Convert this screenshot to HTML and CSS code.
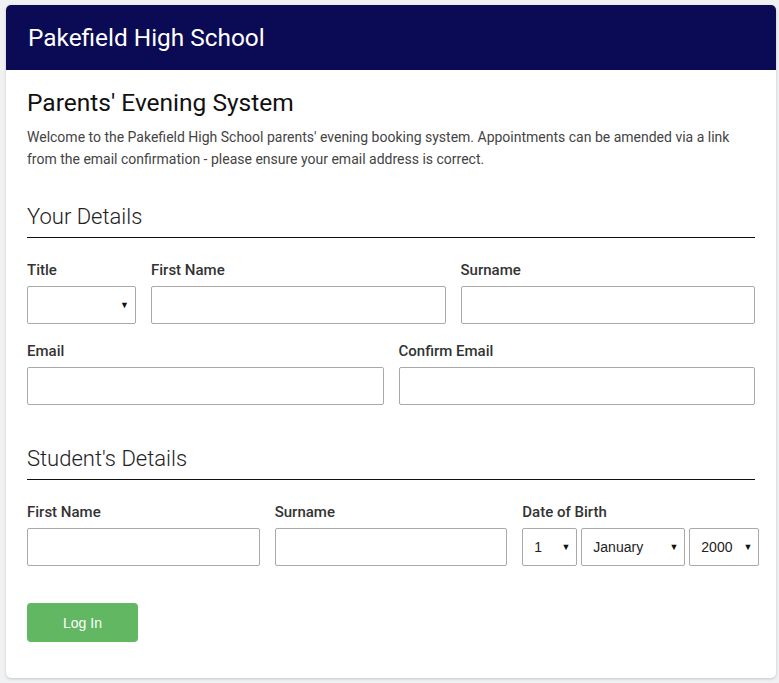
FILE: index.html
```html
<!DOCTYPE html>
<html>
<head>
<meta charset="utf-8">
<title>Pakefield High School</title>
<link rel="stylesheet" href="styles.css">
</head>
<body>
<div class="card">
  <div class="header">Pakefield High School</div>
  <div class="content">
    <h1 class="title">Parents' Evening System</h1>
    <p class="intro">Welcome to the Pakefield High School parents' evening booking system. Appointments can be amended via a link from the email confirmation - please ensure your email address is correct.</p>

    <h2 class="section first">Your Details</h2>
    <div class="row row-a">
      <div class="field">
        <label class="label">Title</label>
        <div class="select"><span class="val"></span><span class="arrow">&#9660;</span></div>
      </div>
      <div class="field">
        <label class="label">First Name</label>
        <div class="input"></div>
      </div>
      <div class="field">
        <label class="label">Surname</label>
        <div class="input"></div>
      </div>
    </div>
    <div class="row row-b">
      <div class="field">
        <label class="label">Email</label>
        <div class="input"></div>
      </div>
      <div class="field">
        <label class="label">Confirm Email</label>
        <div class="input"></div>
      </div>
    </div>

    <h2 class="section second">Student's Details</h2>
    <div class="row row-c">
      <div class="field">
        <label class="label">First Name</label>
        <div class="input"></div>
      </div>
      <div class="field">
        <label class="label">Surname</label>
        <div class="input"></div>
      </div>
      <div class="field">
        <label class="label">Date of Birth</label>
        <div class="dob">
          <div class="select s-day"><span class="val">1</span><span class="arrow">&#9660;</span></div>
          <div class="select s-month"><span class="val">January</span><span class="arrow">&#9660;</span></div>
          <div class="select s-year"><span class="val">2000</span><span class="arrow">&#9660;</span></div>
        </div>
      </div>
    </div>

    <button class="btn">Log In</button>
  </div>
</div>
</body>
</html>
```
FILE: styles.css
```css
html, body {
  margin: 0;
  padding: 0;
  background: #f0f1f3;
}
body {
  padding: 5px 3px 5px 6px;
  font-family: Roboto, "Liberation Sans", sans-serif;
}
.card {
  background: #fff;
  border-radius: 5px;
  box-shadow: 0 1px 3px rgba(0,0,0,0.18);
  overflow: hidden;
}
.header {
  height: 65px;
  background: #0a0a55;
  color: #fff;
  font-size: 24.4px;
  line-height: 65px;
  padding-left: 22px;
}
.content {
  padding: 19px 21px 36px 21px;
}
.title {
  margin: 0;
  font-size: 24.5px;
  line-height: 28px;
  font-weight: 400;
  color: #111;
}
.intro {
  margin: 9px 0 0 0;
  font-size: 14px;
  line-height: 22px;
  color: #444;
}
.section {
  margin: 0;
  font-size: 22px;
  line-height: 26px;
  font-weight: 300;
  color: #222;
  padding-bottom: 7px;
  border-bottom: 1px solid #111;
}
.section.first { margin-top: 34px; }
.section.second { margin-top: 41px; }
.row {
  display: grid;
  column-gap: 15px;
}
.row-a { grid-template-columns: 109px 1fr 1fr; margin-top: 24px; }
.row-b { grid-template-columns: 1fr 1fr; margin-top: 19px; }
.row-c { grid-template-columns: 1fr 1fr 1fr; margin-top: 24px; }
.field {
  display: flex;
  flex-direction: column;
  min-width: 0;
}
.label {
  font-size: 15px;
  line-height: 17px;
  font-weight: 500;
  color: #333;
  margin-bottom: 7px;
}
.input {
  height: 36px;
  border: 1px solid #a9a9a9;
  border-radius: 2px;
  background: #fff;
}
.select {
  height: 36px;
  border: 1px solid #a9a9a9;
  border-radius: 2px;
  background: #fff;
  display: flex;
  align-items: center;
  justify-content: space-between;
  padding: 0 6px 0 11px;
  font-family: "Liberation Sans", Arial, sans-serif;
  font-size: 14px;
  color: #222;
  box-sizing: content-box;
  flex-shrink: 0;
}
.arrow {
  font-size: 9px;
  color: #111;
}
.dob {
  display: flex;
  gap: 4px;
}
.s-day { width: 36px; }
.s-month { width: 85px; }
.s-year { width: 51px; }
.btn {
  display: block;
  margin-top: 37px;
  width: 111px;
  height: 39px;
  border: none;
  border-radius: 4px;
  background: #62b862;
  color: #fff;
  font-family: "Liberation Sans", Arial, sans-serif;
  font-size: 14px;
  padding: 0;
}
```
